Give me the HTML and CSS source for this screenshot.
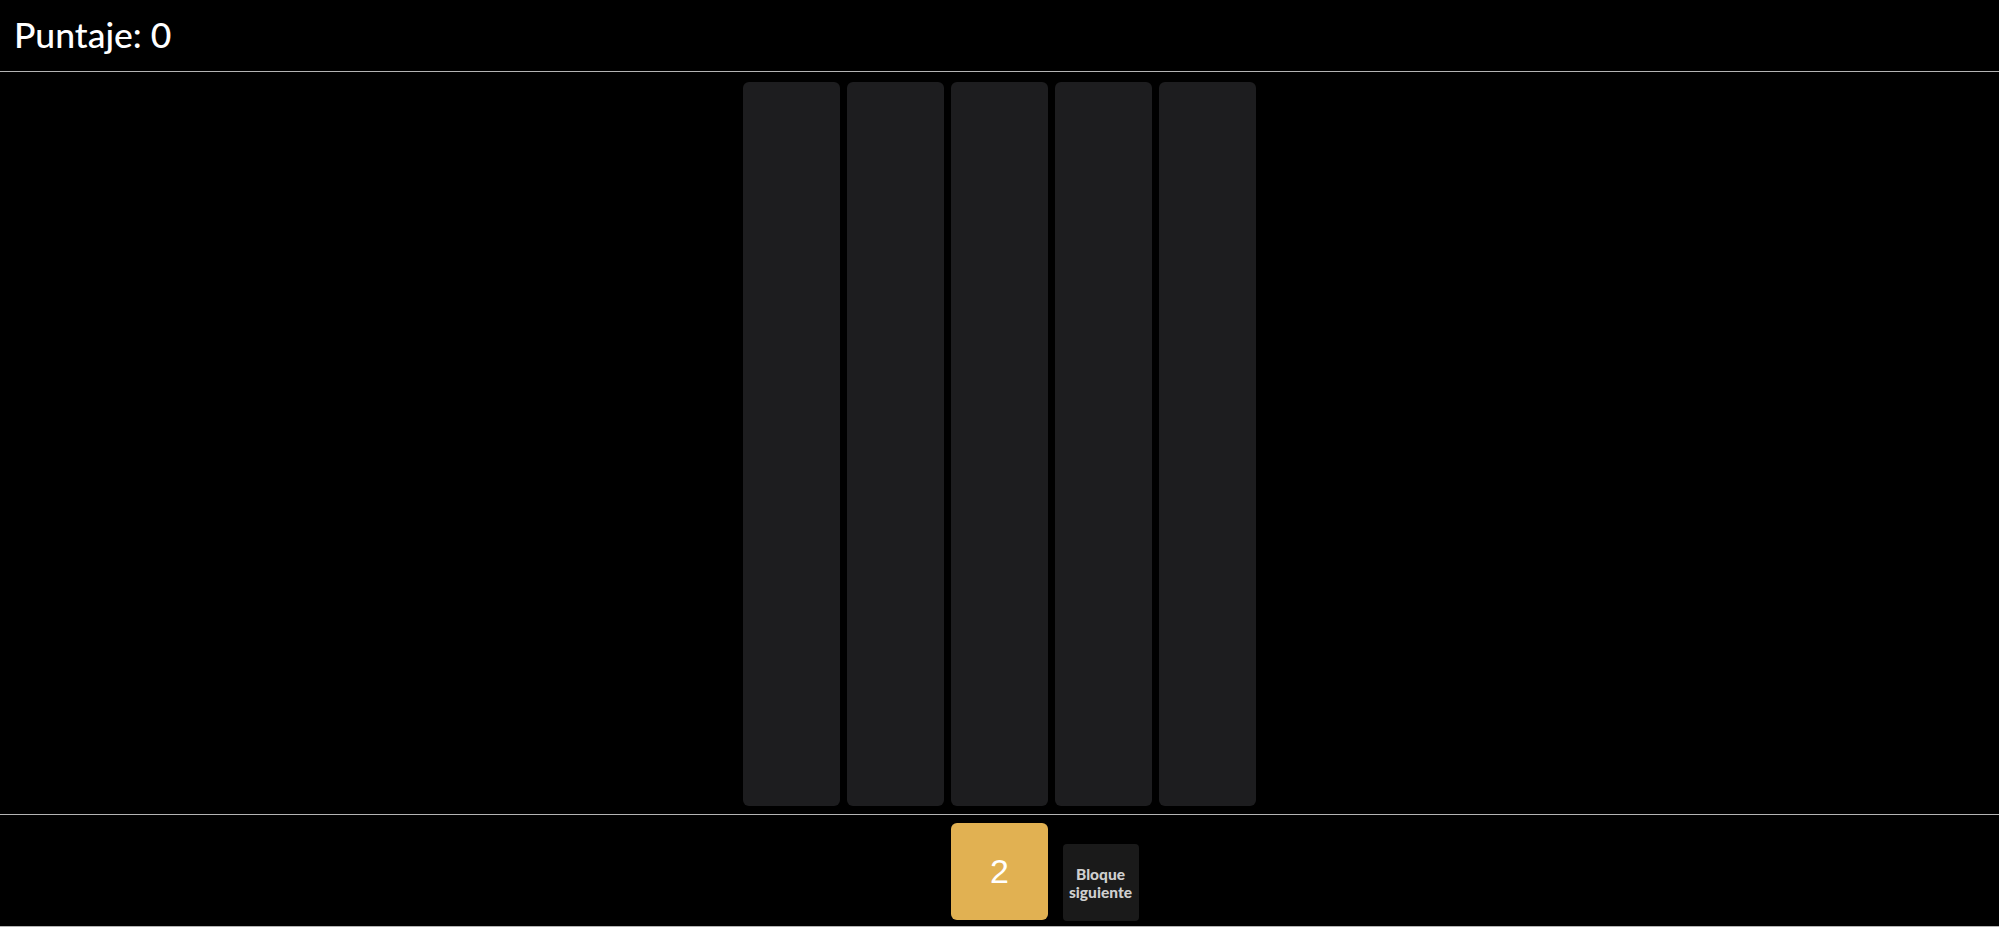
FILE: index.html
```html
<!DOCTYPE html>
<html lang="es">
<head>
<meta charset="utf-8">
<title>Puntaje</title>
<link rel="stylesheet" href="styles.css">
</head>
<body>
<div class="app">
  <header class="topbar">
    <h1 class="score">Puntaje: 0</h1>
  </header>
  <main class="board">
    <div class="column"></div>
    <div class="column"></div>
    <div class="column"></div>
    <div class="column"></div>
    <div class="column"></div>
  </main>
  <footer class="tray">
    <div class="current-block">2</div>
    <div class="next-block">Bloque siguiente</div>
  </footer>
</div>
</body>
</html>
```

FILE: styles.css
```css
html, body {
  margin: 0;
  padding: 0;
  background: #ffffff;
}

.app {
  background: #000000;
  display: flex;
  flex-direction: column;
  font-family: Lato, "Noto Sans", sans-serif;
}

.topbar {
  height: 71px;
  border-bottom: 1px solid #b4b4b4;
  display: flex;
  align-items: center;
  padding-left: 14px;
}

.score {
  margin: 0 0 2px;
  color: #ffffff;
  font-size: 35.5px;
  font-weight: 500;
  letter-spacing: 0;
}

.board {
  display: flex;
  justify-content: center;
  gap: 7px;
  padding: 10px 0 8px;
  border-bottom: 1px solid #b4b4b4;
}

.column {
  width: 97px;
  height: 724px;
  background: #1d1d1f;
  border-radius: 6px;
}

.tray {
  position: relative;
  height: 111px;
  border-bottom: 1px solid #b4b4b4;
  display: flex;
  justify-content: center;
  align-items: center;
}

.current-block {
  width: 97px;
  height: 97px;
  background: #e1b152;
  border-radius: 6px;
  color: #ffffff;
  font-family: "Liberation Sans", Arial, sans-serif;
  font-size: 34px;
  display: flex;
  align-items: center;
  justify-content: center;
  margin-top: 1px;
}

.next-block {
  position: absolute;
  left: calc(50% + 63px);
  top: 29px;
  width: 76px;
  height: 77px;
  background: #1a1a1a;
  border-radius: 4px;
  color: #cfcfcf;
  font-size: 15.5px;
  font-weight: 900;
  line-height: 18px;
  text-align: center;
  display: flex;
  align-items: center;
  justify-content: center;
}
```
